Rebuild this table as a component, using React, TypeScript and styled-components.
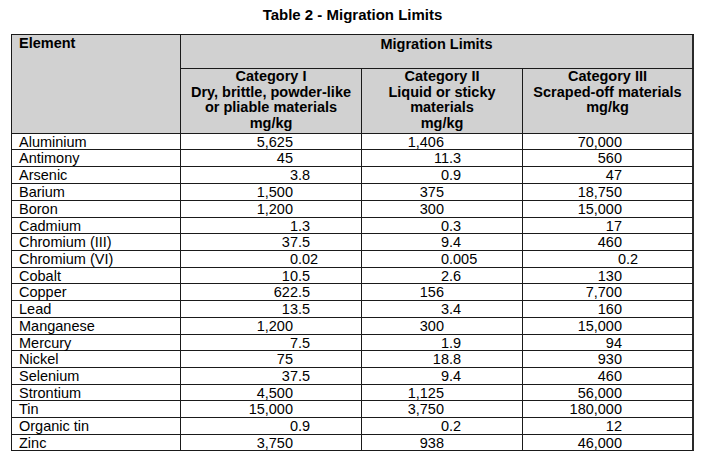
import React from 'react'
import styled, { createGlobalStyle } from 'styled-components'

const GlobalStyle = createGlobalStyle`
  body {
    margin: 0;
    background: #ffffff;
    font-family: "Liberation Sans", Arial, sans-serif;
    color: #000;
  }
`

// border lines of the body rows, as measured on the page
const rowLines = [132, 148, 165, 182, 199, 216, 232, 249, 266, 282, 299, 316, 333, 349, 366, 383, 399, 416, 433, 449]
const bodyRows = rowLines.slice(1).map((y, i) => `${y - rowLines[i]}px`).join(' ')

const rows = [
  ['Aluminium', '5,625', '1,406', '70,000'],
  ['Antimony', '45', '11.3', '560'],
  ['Arsenic', '3.8', '0.9', '47'],
  ['Barium', '1,500', '375', '18,750'],
  ['Boron', '1,200', '300', '15,000'],
  ['Cadmium', '1.3', '0.3', '17'],
  ['Chromium (III)', '37.5', '9.4', '460'],
  ['Chromium (VI)', '0.02', '0.005', '0.2'],
  ['Cobalt', '10.5', '2.6', '130'],
  ['Copper', '622.5', '156', '7,700'],
  ['Lead', '13.5', '3.4', '160'],
  ['Manganese', '1,200', '300', '15,000'],
  ['Mercury', '7.5', '1.9', '94'],
  ['Nickel', '75', '18.8', '930'],
  ['Selenium', '37.5', '9.4', '460'],
  ['Strontium', '4,500', '1,125', '56,000'],
  ['Tin', '15,000', '3,750', '180,000'],
  ['Organic tin', '0.9', '0.2', '12'],
  ['Zinc', '3,750', '938', '46,000'],
]

// where whole numbers end, and where the decimal point sits, per column
const tabs = [
  { int: 112, dec: 117 },
  { int: 82, dec: 87 },
  { int: 99, dec: 103 },
]

const categories = [
  ['Category I', 'Dry, brittle, powder-like', 'or pliable materials', 'mg/kg'],
  ['Category II', 'Liquid or sticky', 'materials', 'mg/kg'],
  ['Category III', 'Scraped-off materials', 'mg/kg'],
]

const Value = ({ v, tab }: { v: string; tab: { int: number; dec: number } }) => {
  const [whole, frac] = v.split('.')
  return (
    <>
      <IntPart $w={frac ? tab.dec : tab.int}>{whole}</IntPart>
      {frac && <span>.{frac}</span>}
    </>
  )
}

const App = () => {
  return (
    <Page>
      <GlobalStyle />
      <Title>Table 2 - Migration Limits</Title>
      <Table>
        <HeadCell $span={2} $left>Element</HeadCell>
        <GroupCell>Migration Limits</GroupCell>
        {categories.map((c, i) => (
          <HeadCell key={i} $last={i == 2}>
            {c.map((line, j) => <div key={j}>{line}</div>)}
          </HeadCell>
        ))}
        {rows.map((r, i) => (
          <React.Fragment key={i}>
            <NameCell>{r[0]}</NameCell>
            {r.slice(1).map((v, j) => (
              <NumCell key={j} $last={j == 2}>
                <Value v={v} tab={tabs[j]} />
              </NumCell>
            ))}
          </React.Fragment>
        ))}
      </Table>
    </Page>
  )
}

export default App

const Page = styled.div`
  width: 706px;
  height: 458px;
  padding: 6px 0 0 11px;
  box-sizing: border-box;
`
const Title = styled.div`
  width: 683px;
  text-align: center;
  font-weight: 700;
  font-size: 15px;
  line-height: 18px;
  margin-bottom: 10px;
`
const Table = styled.div`
  display: grid;
  grid-template-columns: 169px 181px 161px 171px;
  grid-template-rows: 34px 65px ${bodyRows};
  width: max-content;
  border-top: 1px solid #1a1a1a;
  border-left: 1px solid #1a1a1a;
  font-size: 14.5px;
`
const Cell = styled.div<{ $last?: boolean }>`
  box-sizing: border-box;
  border-right: ${(p) => (p.$last ? '2px solid #2a2a2a' : '1px solid #1a1a1a')};
  border-bottom: 1px solid #1a1a1a;
  white-space: nowrap;
`
const HeadCell = styled(Cell)<{ $span?: number; $left?: boolean }>`
  grid-row: span ${(p) => p.$span || 1};
  background: #d1d1d1;
  font-weight: 700;
  line-height: 15.7px;
  text-align: ${(p) => (p.$left ? 'left' : 'center')};
  padding-left: ${(p) => (p.$left ? '7px' : '0')};
  padding-top: ${(p) => (p.$left ? '1px' : '0')};
`
const GroupCell = styled(Cell)`
  grid-column: 2 / span 3;
  background: #d1d1d1;
  font-weight: 700;
  text-align: center;
  line-height: 16px;
  padding-top: 1px;
  border-right: 2px solid #2a2a2a;
`
const NameCell = styled(Cell)`
  padding-left: 7px;
  line-height: 16px;
`
const NumCell = styled(Cell)`
  line-height: 16px;
`
const IntPart = styled.span<{ $w: number }>`
  display: inline-block;
  width: ${(p) => p.$w}px;
  text-align: right;
`
